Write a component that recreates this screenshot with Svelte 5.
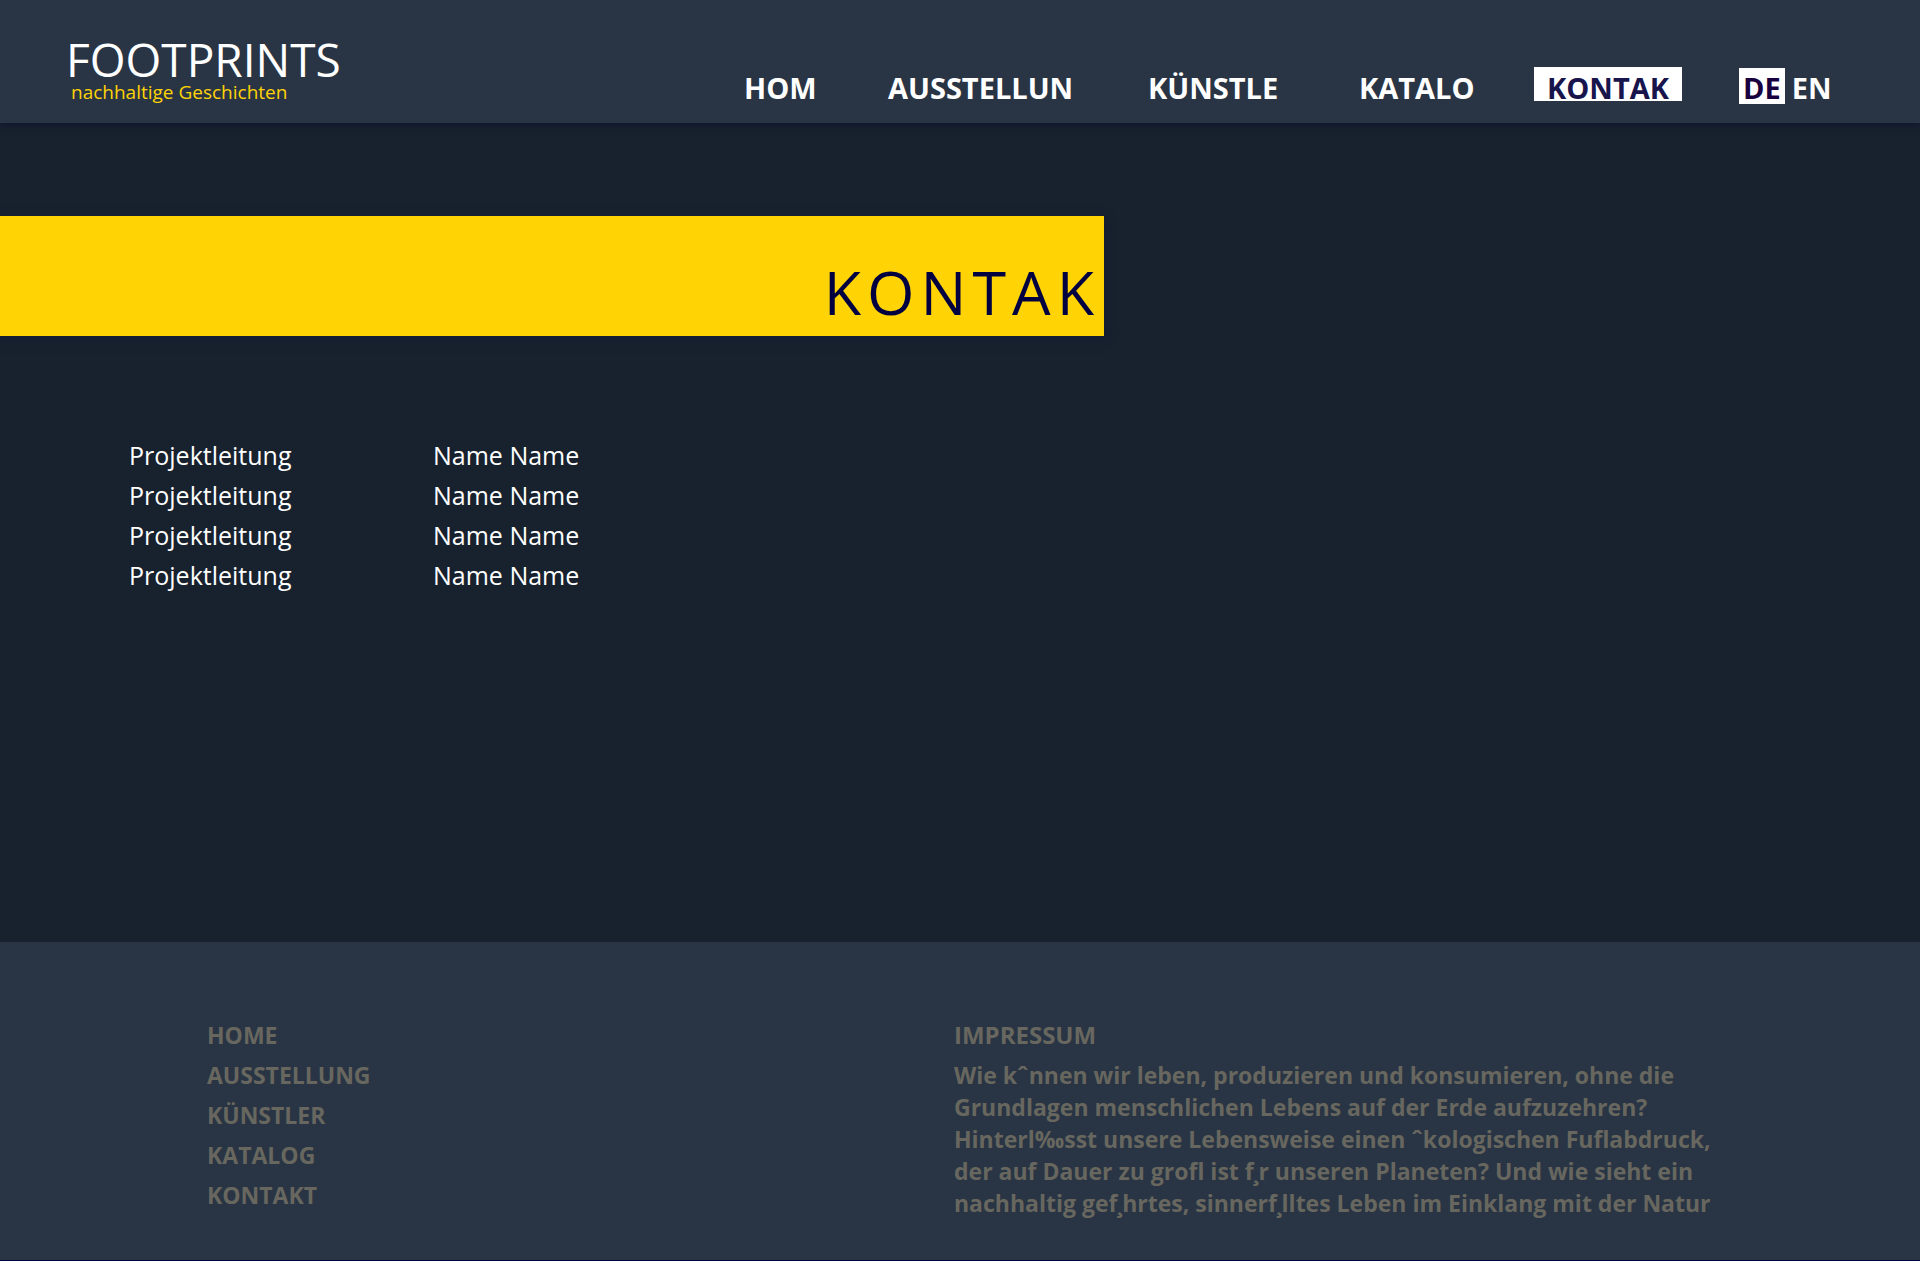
<script>
  const nav = [
    { label: 'HOM', href: '#home' },
    { label: 'AUSSTELLUN', href: '#ausstellung' },
    { label: 'KÜNSTLE', href: '#kuenstler' },
    { label: 'KATALO', href: '#katalog' },
    { label: 'KONTAK', href: '#kontakt', active: true }
  ];
  const team = Array.from({ length: 4 }, () => ({ role: 'Projektleitung', name: 'Name Name' }));
  const footerLinks = [
    { label: 'HOME', href: '#home' },
    { label: 'AUSSTELLUNG', href: '#ausstellung' },
    { label: 'KÜNSTLER', href: '#kuenstler' },
    { label: 'KATALOG', href: '#katalog' },
    { label: 'KONTAKT', href: '#kontakt' }
  ];
  const imprint = [
    'Wie kˆnnen wir leben, produzieren und konsumieren, ohne die',
    'Grundlagen menschlichen Lebens auf der Erde aufzuzehren?',
    'Hinterl‰sst unsere Lebensweise einen ˆkologischen Fuflabdruck,',
    'der auf Dauer zu grofl ist f¸r unseren Planeten? Und wie sieht ein',
    'nachhaltig gef¸hrtes, sinnerf¸lltes Leben im Einklang mit der Natur'
  ];
</script>

<div class="page">
  <header>
    <a class="brand" href="#home">
      <span class="name">FOOTPRINTS</span>
      <span class="claim">nachhaltige Geschichten</span>
    </a>
    <nav>
      {#each nav as item}
        <a href={item.href} class:active={item.active}>{item.label}</a>
      {/each}
      <div class="lang">
        <button class="current" type="button">DE</button>
        <button type="button">EN</button>
      </div>
    </nav>
  </header>

  <main>
    <h1>KONTAK</h1>
    <table>
      <tbody>
        {#each team as row}
          <tr><td>{row.role}</td><td>{row.name}</td></tr>
        {/each}
      </tbody>
    </table>
  </main>

  <footer>
    <ul>
      {#each footerLinks as link}
        <li><a href={link.href}>{link.label}</a></li>
      {/each}
    </ul>
    <section>
      <h2>IMPRESSUM</h2>
      <p>
        {#each imprint as line}
          <span>{line}</span>
        {/each}
      </p>
    </section>
  </footer>
</div>

<style>
  :global(body) {
    margin: 0;
    background: #18212e;
  }
  .page {
    box-sizing: border-box;
    min-height: 100vh;
    display: flex;
    flex-direction: column;
    border-bottom: 1px solid #000040;
    font-family: 'Segoe UI', 'Open Sans', 'Noto Sans', sans-serif;
    color: #fff;
  }
  a {
    color: inherit;
    text-decoration: none;
  }
  header {
    display: grid;
    grid-template-columns: 678fr 1176fr;
    padding: 36px 0 19px 66px;
    background: #293544;
    box-shadow: 0 3px 6px #10182f;
  }
  .brand {
    display: flex;
    flex-direction: column;
  }
  .name {
    font-size: 46px;
    line-height: 46px;
  }
  .claim {
    padding-left: 5px;
    font-size: 19px;
    line-height: 20px;
    color: #ffd304;
  }
  nav {
    display: grid;
    grid-template-columns: 144fr 260fr 211fr 175fr 205fr 181fr;
    justify-items: start;
    align-items: end;
    min-height: 68px;
    font-size: 29px;
    font-weight: 700;
    line-height: 26px;
  }
  nav a {
    margin-bottom: 3px;
  }
  nav a.active {
    padding: 8px 13px 0;
    background: #fff;
    color: #18144c;
  }
  .lang {
    display: flex;
    gap: 3px;
  }
  button {
    padding: 4px 4px 0;
    border: 0;
    background: none;
    font: inherit;
    line-height: 32px;
    color: inherit;
    cursor: pointer;
  }
  button.current {
    background: #fff;
    color: #180040;
  }
  main {
    flex: 1;
    padding-top: 93px;
  }
  h1 {
    box-sizing: border-box;
    width: 57.5%;
    margin: 0;
    padding: 34px 4px 2px 0;
    background: #ffd304;
    box-shadow: 0 3px 10px #141c34;
    color: #000040;
    font-size: 61px;
    font-weight: 400;
    line-height: 84px;
    letter-spacing: 6px;
    text-align: right;
  }
  table {
    margin: 99px 0 0 129px;
    border-collapse: collapse;
    font-size: 25px;
    line-height: 40px;
  }
  td {
    padding: 0;
  }
  td:first-child {
    width: 304px;
  }
  footer {
    display: grid;
    grid-template-columns: 747fr 966fr;
    padding: 73px 0 41px 207px;
    background: #293544;
    color: #68675f;
    font-size: 23px;
    font-weight: 700;
  }
  ul {
    margin: 0;
    padding: 0;
    list-style: none;
    line-height: 40px;
  }
  h2 {
    margin: 0;
    font-size: 24px;
    line-height: 40px;
  }
  p {
    margin: 4px 0 0;
    line-height: 32px;
  }
  p span {
    display: block;
  }
</style>
